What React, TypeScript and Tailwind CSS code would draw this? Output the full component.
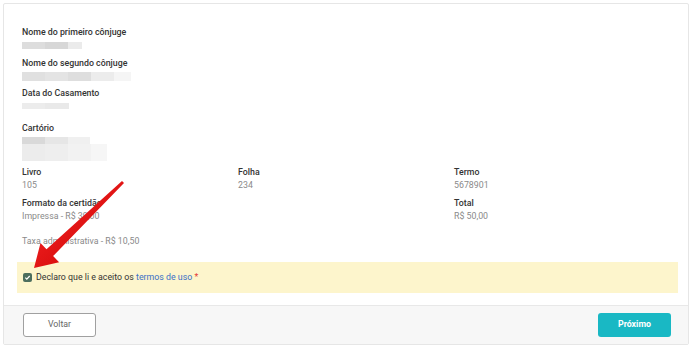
import React from "react";

const Label = ({ children, className = "" }: { children: React.ReactNode; className?: string }) => (
  <div className={`text-[8.8px] leading-[13px] font-medium text-[#333333] ${className}`}>{children}</div>
);
const Value = ({ children, className = "" }: { children: React.ReactNode; className?: string }) => (
  <div className={`text-[8.8px] leading-[13px] text-[#8a8a8a] ${className}`}>{children}</div>
);

const Blur = ({ segs, h, className = "" }: { segs: [number, string][]; h: string; className?: string }) => (
  <div className={`flex ${h} ${className}`}>
    {segs.map(([w, c], i) => (
      <div key={i} style={{ width: w, background: c }} />
    ))}
  </div>
);

export default function App() {
  return (
    <div className="relative w-[695px] h-[350px] bg-white" style={{ fontFamily: "Roboto, 'Liberation Sans', sans-serif" }}>
      <div className="absolute left-[3px] top-[3px] w-[686px] h-[342px] border border-[#e6e6e6] rounded-[2px] flex flex-col overflow-hidden">
        <div className="flex-1 flex flex-col pt-[22px]">
          <div className="flex flex-col px-[18px]">
            <Label>Nome do primeiro cônjuge</Label>
            <Blur className="mt-[3px]" h="h-[7px]" segs={[[23, "#dddddd"], [23, "#d7d7d7"], [14, "#ebebeb"]]} />
            <Label className="mt-[8px]">Nome do segundo cônjuge</Label>
            <Blur className="mt-[2px]" h="h-[9px]" segs={[[23, "#e0e0e0"], [23, "#e4e4e4"], [23, "#dedede"], [23, "#ececec"], [17, "#f5f5f5"]]} />
            <Label className="mt-[6px]">Data do Casamento</Label>
            <Blur className="mt-[3px]" h="h-[6px]" segs={[[23, "#ececec"], [24, "#e9e9e9"]]} />
            <Label className="mt-[13px]">Cartório</Label>
            <div className="mt-[2px] flex flex-col">
              <Blur h="h-[7px]" segs={[[23, "#d9d9d9"], [23, "#e6e6e6"], [22, "#f0f0f0"]]} />
              <Blur h="h-[17px]" segs={[[23, "#ececec"], [23, "#eeeeee"], [23, "#f2f2f2"], [16, "#f6f6f6"]]} />
            </div>
            <div className="mt-[5px] grid grid-cols-[216px_216px_216px]">
              <div>
                <Label>Livro</Label>
                <Value>105</Value>
              </div>
              <div>
                <Label>Folha</Label>
                <Value>234</Value>
              </div>
              <div>
                <Label>Termo</Label>
                <Value>5678901</Value>
              </div>
            </div>
            <div className="mt-[5px] grid grid-cols-[216px_216px_216px]">
              <div>
                <Label>Formato da certidão</Label>
                <Value>Impressa - R$ 39,00</Value>
              </div>
              <div />
              <div>
                <Label>Total</Label>
                <Value>R$ 50,00</Value>
              </div>
            </div>
            <Value className="mt-[12px]">Taxa administrativa - R$ 10,50</Value>
          </div>
          <div className="mt-[14px] ml-[13px] mr-[10px] h-[31px] bg-[#fdf5cc] flex items-center pl-[6px]">
            <div className="w-[9px] h-[9px] rounded-[2px] bg-[#4d6e5e] flex items-center justify-center">
              <svg width="7" height="7" viewBox="0 0 8 8">
                <path d="M1.5 4.2 L3.2 5.8 L6.5 2.3" fill="none" stroke="white" strokeWidth="1.4" />
              </svg>
            </div>
            <span className="ml-[4px] text-[8.8px] leading-[13px] text-[#333]">
              Declaro que li e aceito os <span className="text-[#3a6fc6]">termos de uso</span>{" "}
              <span className="text-[#e53935]">*</span>
            </span>
          </div>
        </div>
        <div className="mt-[11px] h-[39px] border-t border-[#e8e8e8] bg-[#f7f7f7] flex items-start justify-between pt-[7px] pl-[19px] pr-[17px]">
          <button className="w-[73px] h-[24px] bg-white border border-[#a0a0a0] rounded-[3px] text-[8.8px] text-[#666]">
            Voltar
          </button>
          <button className="w-[73px] h-[24px] bg-[#19b8c4] rounded-[3px] text-[8.8px] font-bold text-white">
            Próximo
          </button>
        </div>
      </div>
      <svg className="absolute left-0 top-0 pointer-events-none" width="695" height="350">
        <defs>
          <linearGradient id="ag" x1="0" y1="0" x2="1" y2="1">
            <stop offset="0" stopColor="#ff2a2a" />
            <stop offset="1" stopColor="#c40000" />
          </linearGradient>
        </defs>
        <polygon
          points="122,181 46.5,249.3 40.5,243.1 34,268 59.1,262.3 53.1,256.1 124,183"
          fill="url(#ag)"
        />
      </svg>
    </div>
  );
}
